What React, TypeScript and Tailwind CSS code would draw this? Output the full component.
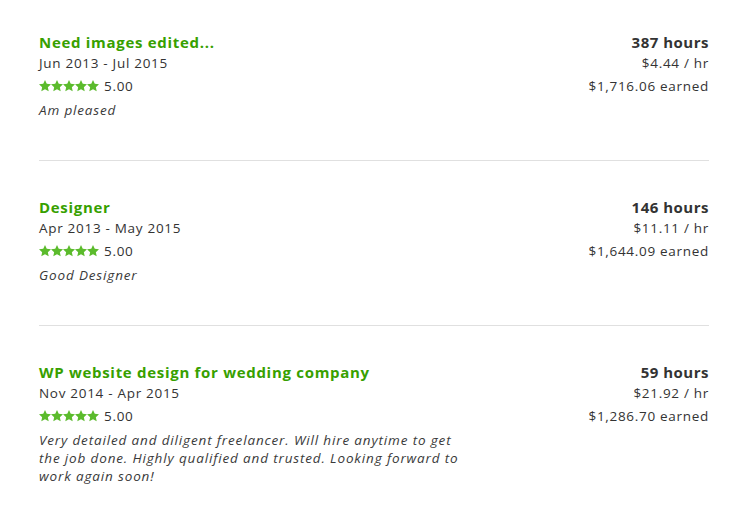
const JOBS = [
  {
    title: "Need images edited...",
    dates: "Jun 2013 - Jul 2015",
    rating: "5.00",
    comment: "Am pleased",
    hours: "387 hours",
    rate: "$4.44 / hr",
    earned: "$1,716.06 earned",
  },
  {
    title: "Designer",
    dates: "Apr 2013 - May 2015",
    rating: "5.00",
    comment: "Good Designer",
    hours: "146 hours",
    rate: "$11.11 / hr",
    earned: "$1,644.09 earned",
  },
  {
    title: "WP website design for wedding company",
    dates: "Nov 2014 - Apr 2015",
    rating: "5.00",
    // line breaks kept as in the original feedback box
    comment:
      "Very detailed and diligent freelancer. Will hire anytime to get\nthe job done. Highly qualified and trusted. Looking forward to\nwork again soon!",
    hours: "59 hours",
    rate: "$21.92 / hr",
    earned: "$1,286.70 earned",
  },
];

const Star = () => (
  <svg width="12" height="11.5" viewBox="0 0 24 23" className="fill-[#5bbb2c]">
    <path d="M12 0l3.5 7.6 8.5.9-6.3 5.8 1.7 8.3L12 18.4l-7.4 4.2 1.7-8.3L0 8.5l8.5-.9z" />
  </svg>
);

const App = () => {
  return (
    <div className="min-h-screen bg-white pl-[39px] pr-[40px] font-['Open_Sans',sans-serif]">
      {JOBS.map((job, i) => (
        <div
          key={job.title}
          className={`flex justify-between ${i === 0 ? "pt-[31px]" : "pt-[35px]"} ${
            i < JOBS.length - 1 ? "pb-[41px] border-b border-[#e0e0e0]" : "pb-[30px]"
          }`}
        >
          <div className="w-[460px]">
            <div className="text-[15px] leading-[22px] font-bold tracking-[0.7px] text-[#37a000]">{job.title}</div>
            <div className="text-[13.5px] leading-[21px] tracking-[0.7px] text-[#333]">{job.dates}</div>
            <div className="flex items-center gap-[5px] h-[22px] pt-[2px] text-[13.5px] tracking-[0.7px] text-[#333]">
              <div className="flex">
                <Star />
                <Star />
                <Star />
                <Star />
                <Star />
              </div>
              <span>{job.rating}</span>
            </div>
            <p className="mt-[5px] text-[13.5px] leading-[18px] italic tracking-[0.85px] whitespace-pre-line text-[#3a3a3a]">
              {job.comment}
            </p>
          </div>
          <div className="text-right">
            <div className="text-[15px] leading-[22px] font-bold tracking-[0.5px] text-[#333]">{job.hours}</div>
            <div className="text-[13.5px] leading-[21px] tracking-[0.7px] text-[#333]">{job.rate}</div>
            <div className="text-[13.5px] leading-[22px] pt-px tracking-[0.7px] text-[#333]">{job.earned}</div>
          </div>
        </div>
      ))}
    </div>
  );
};

export default App;
